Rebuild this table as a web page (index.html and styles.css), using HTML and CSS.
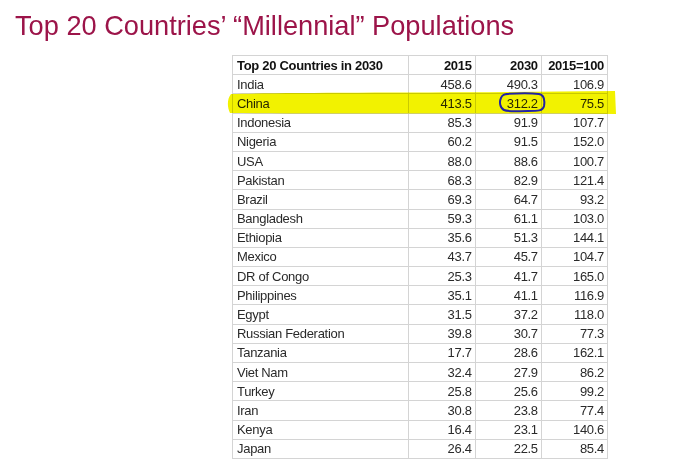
FILE: index.html
```html
<!DOCTYPE html>
<html>
<head>
<meta charset="utf-8">
<link rel="stylesheet" href="styles.css">
</head>
<body>
<h1 class="title">Top 20 Countries’ “Millennial” Populations</h1>
<div class="wrap">
<table class="data">
<colgroup><col class="c-country"><col class="c-num"><col class="c-num"><col class="c-num"></colgroup>
<thead>
<tr><th class="name">Top 20 Countries in 2030</th><th>2015</th><th>2030</th><th>2015=100</th></tr>
</thead>
<tbody>
<tr><td class="name">India</td><td>458.6</td><td>490.3</td><td>106.9</td></tr>
<tr><td class="name">China</td><td>413.5</td><td>312.2</td><td>75.5</td></tr>
<tr><td class="name">Indonesia</td><td>85.3</td><td>91.9</td><td>107.7</td></tr>
<tr><td class="name">Nigeria</td><td>60.2</td><td>91.5</td><td>152.0</td></tr>
<tr><td class="name">USA</td><td>88.0</td><td>88.6</td><td>100.7</td></tr>
<tr><td class="name">Pakistan</td><td>68.3</td><td>82.9</td><td>121.4</td></tr>
<tr><td class="name">Brazil</td><td>69.3</td><td>64.7</td><td>93.2</td></tr>
<tr><td class="name">Bangladesh</td><td>59.3</td><td>61.1</td><td>103.0</td></tr>
<tr><td class="name">Ethiopia</td><td>35.6</td><td>51.3</td><td>144.1</td></tr>
<tr><td class="name">Mexico</td><td>43.7</td><td>45.7</td><td>104.7</td></tr>
<tr><td class="name">DR of Congo</td><td>25.3</td><td>41.7</td><td>165.0</td></tr>
<tr><td class="name">Philippines</td><td>35.1</td><td>41.1</td><td>116.9</td></tr>
<tr><td class="name">Egypt</td><td>31.5</td><td>37.2</td><td>118.0</td></tr>
<tr><td class="name">Russian Federation</td><td>39.8</td><td>30.7</td><td>77.3</td></tr>
<tr><td class="name">Tanzania</td><td>17.7</td><td>28.6</td><td>162.1</td></tr>
<tr><td class="name">Viet Nam</td><td>32.4</td><td>27.9</td><td>86.2</td></tr>
<tr><td class="name">Turkey</td><td>25.8</td><td>25.6</td><td>99.2</td></tr>
<tr><td class="name">Iran</td><td>30.8</td><td>23.8</td><td>77.4</td></tr>
<tr><td class="name">Kenya</td><td>16.4</td><td>23.1</td><td>140.6</td></tr>
<tr><td class="name">Japan</td><td>26.4</td><td>22.5</td><td>85.4</td></tr>
</tbody>
</table>
<svg class="highlight" width="390" height="24" viewBox="0 0 390 24">
<path d="M4 3 C60 1 200 2 388 0 L389 23 C250 22 100 23 3 22 C0 16 0 8 4 3 Z" fill="#f2f200"/>
</svg>
<svg class="circle" width="48" height="21" viewBox="0 0 48 21">
<path d="M8 2 C20 1 34 1 41 2 C46 3 47 8 46 14 C45 19 40 19 30 19 C20 19 10 20 6 18 C2 16 1 10 3 6 C4 3 6 2 10 2" fill="none" stroke="#2222a6" stroke-width="2"/>
</svg>
</div>
</body>
</html>
```
FILE: styles.css
```css
html, body {
  margin: 0;
  padding: 0;
  background: #ffffff;
}
.title {
  margin: 0;
  padding: 11px 0 0 15px;
  height: 45px;
  box-sizing: border-box;
  font-family: "Liberation Sans", Arial, sans-serif;
  font-weight: normal;
  font-size: 27.2px;
  line-height: 30px;
  color: #9c1449;
}
.wrap {
  position: relative;
  margin-left: 232px;
  margin-top: 10px;
  width: 380px;
}
.data {
  border-collapse: collapse;
  width: 376px;
  table-layout: fixed;
  font-family: "Liberation Sans", Arial, sans-serif;
  font-size: 13px;
  color: #2a2a2a;
  letter-spacing: -0.3px;
}
.c-country { width: 176px; }
.c-num { width: 66px; }
.data th, .data td {
  border: 1px solid #d4d4d4;
  height: 18.2px;
  padding: 0 3px 0 4px;
  text-align: right;
  white-space: nowrap;
  line-height: 15px;
}
.data th {
  font-weight: bold;
  color: #111;
}
.data .name {
  text-align: left;
}
.highlight {
  position: absolute;
  left: -5px;
  top: 36px;
  mix-blend-mode: multiply;
}
.circle {
  position: absolute;
  left: 266px;
  top: 37px;
}
```
